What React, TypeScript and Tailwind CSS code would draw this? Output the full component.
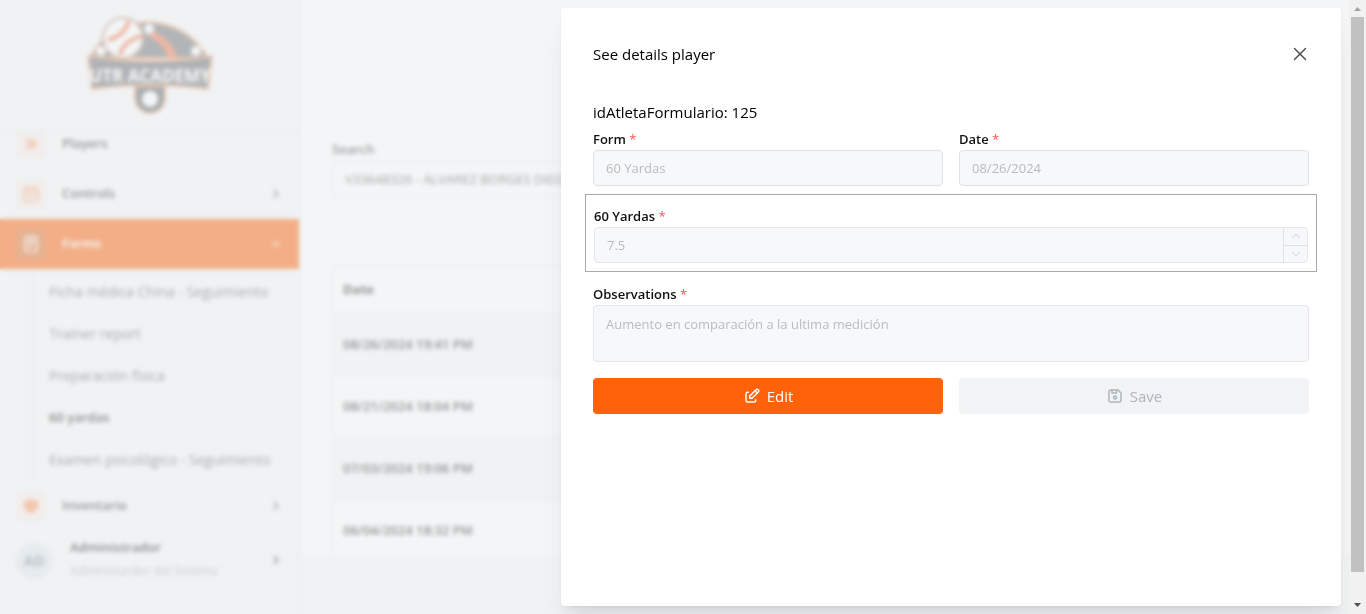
import { useState } from 'react';
import type { ReactNode } from 'react';
import {
  TbCalendar,
  TbChevronDown,
  TbChevronRight,
  TbChevronUp,
  TbChevronsRight,
  TbDeviceFloppy,
  TbEdit,
  TbNotes,
  TbShieldFilled,
  TbX,
} from 'react-icons/tb';

const forms = [
  'Ficha médica China - Seguimiento',
  'Trainer report',
  'Preparación física',
  '60 yardas',
  'Examen psicológico - Seguimiento',
];

const dates = [
  '08/26/2024 19:41 PM',
  '08/21/2024 18:04 PM',
  '07/03/2024 19:06 PM',
  '06/04/2024 18:32 PM',
];

export default function App() {
  const [open, setOpen] = useState(true);

  return (
    <div className="flex h-screen overflow-hidden bg-white font-['Open_Sans',sans-serif] text-black">
      <div className="relative flex min-w-0 flex-1 overflow-hidden">
        <Sidebar />
        <Main />
        {open && (
          <div className="absolute inset-0 flex justify-end bg-[#e9ecef]/55 p-2 backdrop-blur-[2px]">
            <DetailsDrawer onClose={() => setOpen(false)} />
          </div>
        )}
      </div>
      <Scrollbar />
    </div>
  );
}

function Sidebar() {
  return (
    <aside className="flex w-[300px] shrink-0 flex-col border-r border-[#e3e8ea] bg-[#f8f9fa]">
      <div className="flex h-[131px] shrink-0 items-center justify-center border-b border-[#e3e8ea]">
        <Logo />
      </div>
      <nav className="flex min-h-0 flex-1 flex-col justify-end overflow-hidden">
        <NavItem label="Players" icon={<TbChevronsRight size={20} strokeWidth={3} />} />
        <NavItem label="Controls" icon={<TbCalendar size={20} strokeWidth={2} />} arrow={<TbChevronRight size={14} />} />
        <NavItem label="Forms" icon={<TbNotes size={20} strokeWidth={2} />} arrow={<TbChevronDown size={14} />} active />
        <ul className="ml-8 shrink-0 border-l border-[#e3e8ea] pt-0.5">
          {forms.map((form) => (
            <li key={form} className="flex h-[42px] items-center">
              <a
                href="#forms"
                className={
                  form === '60 yardas'
                    ? 'pl-4 text-[13px] font-semibold text-[#222]'
                    : 'pl-4 text-sm text-[#5c666e]'
                }
              >
                {form}
              </a>
            </li>
          ))}
        </ul>
        <NavItem label="Inventario" icon={<TbShieldFilled size={18} />} arrow={<TbChevronRight size={14} />} />
      </nav>
      <button type="button" className="flex h-[83px] shrink-0 items-start px-4 pt-1 text-left">
        <span className="mt-2 flex size-9 items-center justify-center rounded-full bg-[#e2e8ee] text-sm font-bold text-[#868e96]">
          AD
        </span>
        <span className="ml-[18px] flex-1">
          <span className="block text-[13px] font-semibold leading-6 text-[#222]">Administrador</span>
          <span className="block text-xs leading-6 text-[#a5adb4]">Administardor del Sistema</span>
        </span>
        <TbChevronRight size={14} className="mt-[18px]" />
      </button>
    </aside>
  );
}

function NavItem({ label, icon, arrow, active }: { label: string; icon: ReactNode; arrow?: ReactNode; active?: boolean }) {
  return (
    <a
      href="#nav"
      className={
        active
          ? 'flex h-[50px] shrink-0 items-center bg-[#ff6209] px-4 text-white'
          : 'flex h-[50px] shrink-0 items-center px-4 text-[#333]'
      }
    >
      <span
        className={
          active
            ? 'flex size-[30px] items-center justify-center rounded bg-[#e46a22] text-white'
            : 'flex size-[30px] items-center justify-center rounded bg-[#faf0ea] text-[#ff9a62]'
        }
      >
        {icon}
      </span>
      <span className="ml-4 flex-1 text-[13px] font-semibold">{label}</span>
      {arrow}
    </a>
  );
}

function Main() {
  return (
    <main className="flex min-w-0 flex-1 flex-col bg-[#f8f9fa] pb-[59px]">
      <div className="flex min-h-0 flex-1 flex-col overflow-hidden bg-white px-8 pt-[137px]">
        <label htmlFor="search" className="text-[13px] font-semibold leading-6 text-[#444]">
          Search
        </label>
        <input
          id="search"
          readOnly
          value="V33648326 - ALVAREZ BORGES DIEGO"
          className="h-9 w-full shrink-0 rounded border border-[#e9ecef] px-3 text-[13px] text-[#555]"
        />
        <table className="mt-[68px] w-full border border-[#e9ecef] text-left text-[13px] text-[#333]">
          <thead>
            <tr className="h-[48px]">
              <th className="px-2.5 font-bold">Date</th>
            </tr>
          </thead>
          <tbody>
            {dates.map((date) => (
              <tr key={date} className="h-[62px] border-t border-[#e9ecef] odd:bg-[#f8f9fa]">
                <td className="px-2.5 font-semibold">{date}</td>
              </tr>
            ))}
          </tbody>
        </table>
      </div>
    </main>
  );
}

function DetailsDrawer({ onClose }: { onClose: () => void }) {
  return (
    <section
      role="dialog"
      aria-labelledby="drawer-title"
      className="w-[780px] max-w-full overflow-hidden rounded bg-white px-8 shadow-[0_1px_3px_rgba(0,0,0,0.05),0_20px_25px_-5px_rgba(0,0,0,0.08),0_10px_10px_-5px_rgba(0,0,0,0.05)]"
    >
      <header className="flex h-[92px] items-center justify-between">
        <h2 id="drawer-title" className="text-[15px]">See details player</h2>
        <button type="button" aria-label="Close" onClick={onClose} className="-mr-0.5 text-[#495057]">
          <TbX size={22} strokeWidth={1.6} />
        </button>
      </header>
      <p className="text-[15px] leading-6">idAtletaFormulario: 125</p>

      <form onSubmit={(e) => e.preventDefault()}>
        <div className="mt-1 grid grid-cols-2 gap-4">
          <Field id="form" label="Form">
            <input id="form" disabled value="60 Yardas" className="h-9 w-full rounded border border-[#dee2e6] bg-[#f6f8fa] px-3 text-[13px] text-[#b8bcc0]" />
          </Field>
          <Field id="date" label="Date">
            <input id="date" disabled value="08/26/2024" className="h-9 w-full rounded border border-[#dee2e6] bg-[#f6f8fa] px-3 text-[13px] text-[#b8bcc0]" />
          </Field>
        </div>

        <div className="-mx-2 mt-2 border border-[#a9a9a9] px-2 pb-2 pt-2.5">
          <Field id="yards" label="60 Yardas">
            <div className="flex h-9 overflow-hidden rounded border border-[#e4e6ec] bg-[#f6f8fa]">
              <input id="yards" disabled value="7.5" className="min-w-0 flex-1 px-3 pt-0.5 text-[13px] text-[#b8bcc0]" />
              <div className="flex w-6 flex-col border-l border-[#dee2e6] text-[#dcdfe3]">
                <button type="button" disabled aria-label="Increase" className="flex flex-1 items-center justify-center border-b border-[#dee2e6]">
                  <TbChevronUp size={14} />
                </button>
                <button type="button" disabled aria-label="Decrease" className="flex flex-1 items-center justify-center">
                  <TbChevronDown size={14} />
                </button>
              </div>
            </div>
          </Field>
        </div>

        <div className="mt-[11px]">
          <Field id="observations" label="Observations">
            <textarea
              id="observations"
              disabled
              value="Aumento en comparación a la ultima medición"
              className="block h-[57px] w-full resize-none rounded border border-[#e4e6ec] bg-[#f6f8fa] px-3 py-2 text-[13px] leading-5 text-[#b8bcc0]"
            />
          </Field>
        </div>

        <div className="mt-4 grid grid-cols-2 gap-4">
          <button type="button" className="flex h-9 items-center justify-center gap-1.5 rounded bg-[#ff6209] text-[15px] text-white">
            <TbEdit size={18} />
            Edit
          </button>
          <button type="submit" disabled className="flex h-9 items-center justify-center gap-1.5 rounded bg-[#f1f3f5] text-[15px] text-[#adb5bd]">
            <TbDeviceFloppy size={18} />
            Save
          </button>
        </div>
      </form>
    </section>
  );
}

function Field({ id, label, children }: { id: string; label: string; children: ReactNode }) {
  return (
    <div>
      <label htmlFor={id} className="block text-[13px] font-semibold leading-[22px] text-[#111]">
        {label} <span className="font-normal text-[#fa5252]">*</span>
      </label>
      {children}
    </div>
  );
}

function Scrollbar() {
  return (
    <div aria-hidden="true" className="flex w-[17px] shrink-0 flex-col items-center bg-[#f1f1f1]">
      <svg viewBox="0 0 17 17" className="size-[17px]">
        <path d="M5 11h7L8.500 7z" fill="#a3a3a3" />
      </svg>
      <div className="w-[13px] flex-1 bg-[#c1c1c1]" />
      <div className="h-[25px]" />
      <svg viewBox="0 0 17 17" className="size-[17px]">
        <path d="M5 6h7l-3.500 4z" fill="#505050" />
      </svg>
    </div>
  );
}

function Logo() {
  return (
    <svg viewBox="0 0 128 102" className="h-[102px] w-[128px]" role="img" aria-label="Academy logo">
      <path d="M49 72v12a15 15 0 0 0 30 0V72z" fill="#5d6063" stroke="#f0a070" strokeWidth="2" />
      <path d="M4 44Q20 10 62 8q40 2 60 36z" fill="#6f7275" stroke="#f0a070" strokeWidth="2" />
      <path d="M64 17q22 7 27 27l-9-1Q77 28 62 22z" fill="#f4764a" />
      <circle cx="63" cy="15" r="5" fill="#fff" />
      <circle cx="15" cy="37" r="5" fill="#fff" />
      <circle cx="110" cy="37" r="5" fill="#fff" />
      <circle cx="37" cy="24" r="20" fill="#fff" stroke="#b98a70" strokeWidth="2" />
      <path d="M22 26Q38 22 43 7M34 41q3-14 22-19" fill="none" stroke="#f4764a" strokeWidth="4" />
      <path d="M2 42q62 10 124 0l-4 33q-58-8-116 0z" fill="#6a6d70" stroke="#f0a070" strokeWidth="2" />
      <text x="64" y="68" textAnchor="middle" fontSize="17" fontWeight="700" fill="#fff" className="font-['Open_Sans',sans-serif]">
        UTR ACADEMY
      </text>
      <circle cx="64" cy="85" r="8" fill="#fff" />
    </svg>
  );
}
